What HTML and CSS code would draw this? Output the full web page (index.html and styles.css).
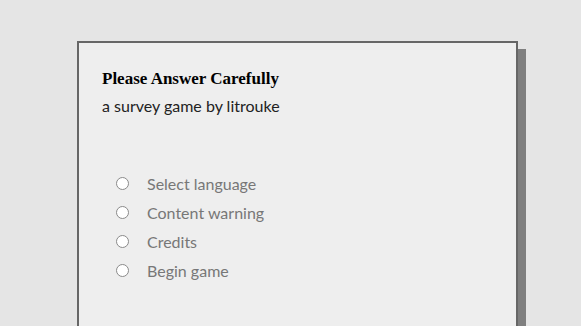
FILE: index.html
```html
<!DOCTYPE html>
<html>
<head>
<meta charset="UTF-8">
<meta name="viewport" content="width=device-width, initial-scale=1.0">
<title>Please Answer Carefully</title>
<link rel="stylesheet" href="styles.css">
</head>
<body>
<div class="page">
  <div class="card">
    <h1 class="title">Please Answer Carefully</h1>
    <p class="byline">a survey game by litrouke</p>
    <ul class="menu">
      <li class="option"><span class="radio"></span><span class="label">Select language</span></li>
      <li class="option"><span class="radio"></span><span class="label">Content warning</span></li>
      <li class="option"><span class="radio"></span><span class="label">Credits</span></li>
      <li class="option"><span class="radio"></span><span class="label">Begin game</span></li>
    </ul>
  </div>
</div>
</body>
</html>
```

FILE: styles.css
```css
html, body {
  margin: 0;
  padding: 0;
  height: 100%;
  overflow: hidden;
}

body {
  background: #e5e5e5;
  font-family: Lato, "Open Sans", sans-serif;
}

.page {
  padding: 41px 0 0 77px;
}

.card {
  width: 441px;
  min-height: 400px;
  box-sizing: border-box;
  border: 2px solid #666;
  background: #eeeeee;
  box-shadow: 8px 8px 0 #7f7f7f;
  padding: 26px 23px 0 23px;
}

.title {
  margin: 0;
  font-family: "Liberation Serif", serif;
  font-weight: bold;
  font-size: 17px;
  line-height: 20px;
  color: #000;
}

.byline {
  margin: 7px 0 0 0;
  font-size: 16px;
  line-height: 20px;
  color: #222;
}

.menu {
  list-style: none;
  margin: 53px 0 0 0;
  padding: 0 0 0 14px;
}

.option {
  display: flex;
  align-items: center;
  height: 29px;
}

.radio {
  width: 11px;
  height: 11px;
  border: 1px solid #8a8a8a;
  border-radius: 50%;
  background: #fff;
  flex: none;
}

.label {
  margin-left: 18px;
  font-size: 16px;
  color: #777;
}
```
